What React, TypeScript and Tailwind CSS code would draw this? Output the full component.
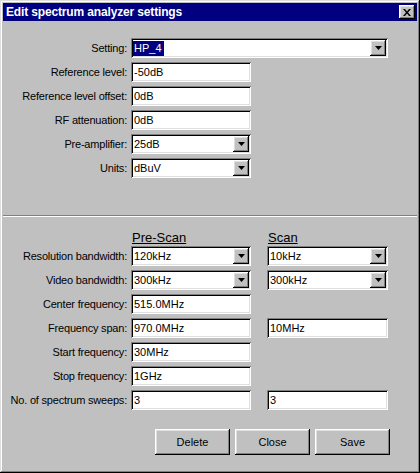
import type { ReactNode } from 'react';

const sunken =
  'bg-white shadow-[inset_1px_1px_#808080,inset_-1px_-1px_#ffffff,inset_2px_2px_#000000,inset_-2px_-2px_#dfdfdf]';
const raised =
  'bg-[#c0c0c0] shadow-[inset_-1px_-1px_#000000,inset_1px_1px_#ffffff,inset_-2px_-2px_#808080,inset_2px_2px_#dfdfdf]';

function TextBox({ value, w = 'w-[120px]' }: { value: string; w?: string }) {
  return (
    <div className={`${sunken} ${w} h-[20px] flex items-center pl-[3px] leading-none`}>
      {value}
    </div>
  );
}

function Arrow() {
  return (
    <div className={`${raised} w-[16px] h-[16px] flex items-center justify-center`}>
      <svg width="7" height="4" viewBox="0 0 7 4">
        <path d="M0 0h7L3.5 4z" fill="#000" />
      </svg>
    </div>
  );
}

function Combo({ value, w = 'w-[120px]', selected }: { value: string; w?: string; selected?: boolean }) {
  return (
    <div className={`${sunken} ${w} h-[20px] flex items-center justify-between pl-[2px] pr-[2px]`}>
      {selected ? (
        <span className="bg-[#000080] text-white h-[15px] pl-[1px] pr-[2px] flex items-center">{value}</span>
      ) : (
        <span className="pl-[1px]">{value}</span>
      )}
      <Arrow />
    </div>
  );
}

function Row({ label, children }: { label: string; children: ReactNode }) {
  return (
    <div className="flex h-[20px] items-center">
      <div className="w-[124px] text-right whitespace-nowrap tracking-[-0.2px]">{label}</div>
      <div className="ml-[4px] flex gap-[16px]">{children}</div>
    </div>
  );
}

function Btn({ label }: { label: string }) {
  return <div className={`${raised} w-[75px] h-[26px] flex items-center justify-center`}>{label}</div>;
}

export default function App() {
  return (
    <div className="w-[420px] h-[473px] bg-[#c0c0c0] p-[3px] flex flex-col text-[11px] text-black font-['Liberation_Sans',Arial,sans-serif] shadow-[inset_-1px_-1px_#000000,inset_1px_1px_#dfdfdf,inset_-2px_-2px_#808080,inset_2px_2px_#ffffff]">
      {/* title bar */}
      <div className="h-[18px] bg-[#000080] flex items-center justify-between pl-[3px] pr-[2px]">
        <span className="text-white font-bold text-[12px] tracking-[-0.15px]">Edit spectrum analyzer settings</span>
        <div className={`${raised} w-[16px] h-[14px] flex items-center justify-center`}>
          <svg width="8" height="7" viewBox="0 0 8 7">
            <path d="M0 0h2l2 2.5L6 0h2L5 3.5 8 7H6L4 4.5 2 7H0l3-3.5z" fill="#000" />
          </svg>
        </div>
      </div>

      {/* body */}
      <div className="flex-1 flex flex-col pt-[17px]">
        <div className="flex flex-col gap-[4px]">
          <Row label="Setting:">
            <Combo value="HP_4" w="w-[257px]" selected />
          </Row>
          <Row label="Reference level:">
            <TextBox value="-50dB" />
          </Row>
          <Row label="Reference level offset:">
            <TextBox value="0dB" />
          </Row>
          <Row label="RF attenuation:">
            <TextBox value="0dB" />
          </Row>
          <Row label="Pre-amplifier:">
            <Combo value="25dB" />
          </Row>
          <Row label="Units:">
            <Combo value="dBuV" />
          </Row>
        </div>

        <div className="mt-[37px] h-[2px] border-t border-b border-t-[#808080] border-b-white" />

        <div className="mt-[12px] h-[17px] flex items-end text-[13px] leading-[17px]">
          <div className="w-[129px]" />
          <div className="w-[136px] underline">Pre-Scan</div>
          <div className="underline">Scan</div>
        </div>

        <div className="flex flex-col gap-[4px]">
          <Row label="Resolution bandwidth:">
            <Combo value="120kHz" />
            <Combo value="10kHz" w="w-[121px]" />
          </Row>
          <Row label="Video bandwidth:">
            <Combo value="300kHz" />
            <Combo value="300kHz" w="w-[121px]" />
          </Row>
          <Row label="Center frequency:">
            <TextBox value="515.0MHz" />
          </Row>
          <Row label="Frequency span:">
            <TextBox value="970.0MHz" />
            <TextBox value="10MHz" w="w-[121px]" />
          </Row>
          <Row label="Start frequency:">
            <TextBox value="30MHz" />
          </Row>
          <Row label="Stop frequency:">
            <TextBox value="1GHz" />
          </Row>
          <Row label="No. of spectrum sweeps:">
            <TextBox value="3" />
            <TextBox value="3" w="w-[121px]" />
          </Row>
        </div>

        <div className="mt-[19px] ml-[152px] flex gap-[5px]">
          <Btn label="Delete" />
          <Btn label="Close" />
          <Btn label="Save" />
        </div>
      </div>
    </div>
  );
}
